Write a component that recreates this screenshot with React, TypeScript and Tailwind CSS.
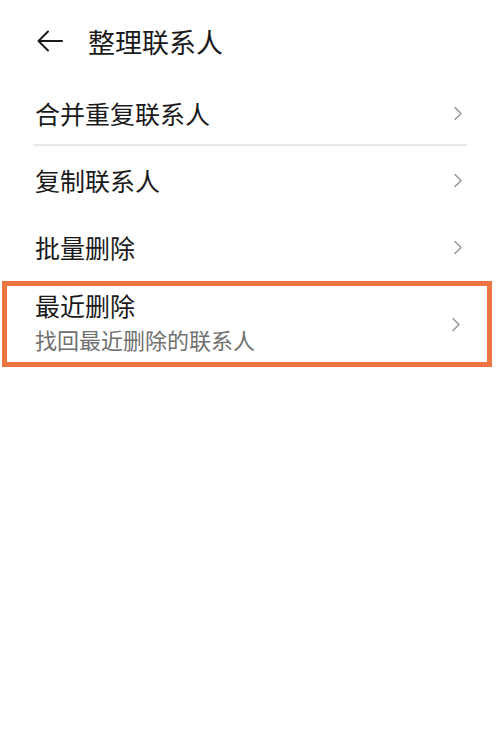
const items = ["合并重复联系人", "复制联系人", "批量删除"];

function Chevron() {
  return (
    <svg width="10" height="15" viewBox="0 0 10 15" fill="none" className="shrink-0">
      <path d="M2 1.5 L8 7.5 L2 13.5" stroke="#9a9a9a" strokeWidth="1.6" strokeLinecap="round" strokeLinejoin="round" />
    </svg>
  );
}

export default function App() {
  return (
    <div
      className="w-[500px] h-[752px] bg-white text-[#1a1a1a]"
      style={{ fontFamily: '"Noto Sans CJK SC", "Noto Sans", sans-serif' }}
    >
      {/* header */}
      <div className="h-[82px] flex items-center pl-[37px]">
        <svg width="26" height="22" viewBox="0 0 26 22" fill="none">
          <path d="M11 1.5 L1.5 11 L11 20.5 M1.5 11 H25" stroke="#1a1a1a" strokeWidth="2" strokeLinecap="round" strokeLinejoin="round" />
        </svg>
        <span className="ml-[25px] text-[27px] leading-none">整理联系人</span>
      </div>

      {/* list */}
      <div className="mx-[33px] h-[64px] flex items-center justify-between pl-[2px] pr-[4px] border-b-2 border-[#e8e8e8]">
        <span className="text-[25px] leading-none">{items[0]}</span>
        <Chevron />
      </div>
      <div className="mx-[33px] h-[68px] flex items-center justify-between pl-[2px] pr-[4px]">
        <span className="text-[25px] leading-none">{items[1]}</span>
        <Chevron />
      </div>
      <div className="mx-[33px] h-[67px] flex items-center justify-between pl-[2px] pr-[4px]">
        <span className="text-[25px] leading-none">{items[2]}</span>
        <Chevron />
      </div>

      {/* highlighted item */}
      <div className="ml-[2px] w-[490px] h-[86px] border-[5px] border-[#ee7441] flex items-center justify-between pl-[28px] pr-[26px]">
        <div className="flex flex-col">
          <span className="text-[25px] leading-[32px] mt-[-6px]">最近删除</span>
          <span className="text-[22px] leading-[30px] mt-[3px] text-[#707070]">找回最近删除的联系人</span>
        </div>
        <Chevron />
      </div>
    </div>
  );
}
